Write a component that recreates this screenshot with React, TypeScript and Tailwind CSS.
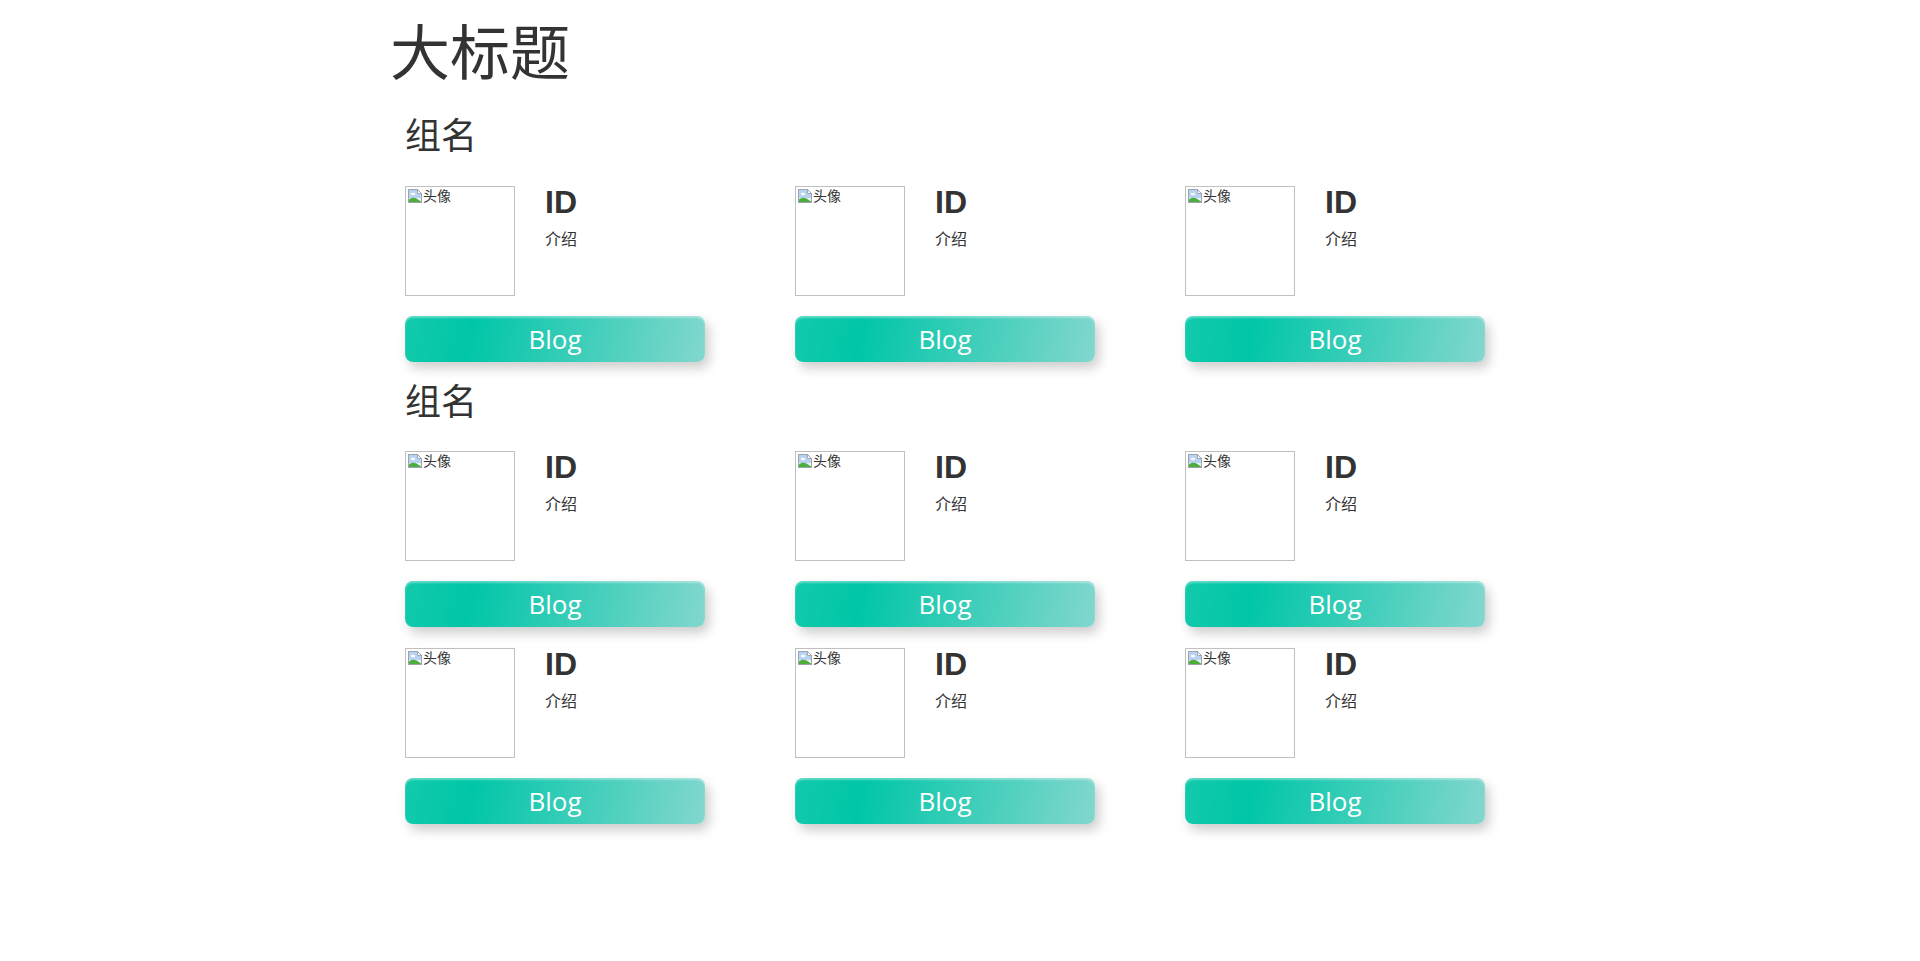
import React from "react";

const BrokenIcon = () => (
  <svg width="16" height="16" viewBox="0 0 16 16" className="shrink-0">
    <path d="M1.5 1.5h9l4 4v9h-13z" fill="#eef3fb" stroke="#a0a8b4" strokeWidth="1" />
    <path d="M10.5 1.5v4h4" fill="#ffffff" stroke="#a0a8b4" strokeWidth="1" />
    <path d="M2 2h8v4h4v4H2z" fill="#b9d3f2" />
    <ellipse cx="6" cy="6" rx="2.2" ry="1.2" fill="#ffffff" />
    <path d="M2 14V11.5C4 9.5 7 9 9.5 10.5L14 13.5V14z" fill="#4caf3c" />
    <path d="M1.5 1.5h9l4 4v9h-13z" fill="none" stroke="#9aa3ae" strokeWidth="1" />
  </svg>
);

const Card = () => (
  <div className="flex flex-col w-[300px] mb-[21px]">
    <div className="flex">
      <div className="w-[110px] h-[110px] border border-[#c0c0c0] shrink-0 flex items-start pl-px pt-px">
        <BrokenIcon />
        <span className="text-[14px] leading-[16px] text-[#333] font-['Liberation_Sans','Noto_Sans_CJK_SC',sans-serif]">
          头像
        </span>
      </div>
      <div className="ml-[30px] flex flex-col">
        <div className="text-[32px] leading-none font-bold text-[#333] font-['Liberation_Sans',Arial,sans-serif]">
          ID
        </div>
        <div className="mt-[12px] text-[16px] leading-none text-[#333] font-['Noto_Sans_CJK_SC',sans-serif]">
          介绍
        </div>
      </div>
    </div>
    <button className="mt-[20px] h-[46px] w-[300px] rounded-lg text-white text-[26px] font-['Open_Sans','Noto_Sans',sans-serif] bg-[linear-gradient(100deg,#12caab_0%,#00c6a7_22%,#82d7ce_100%)] shadow-[4px_6px_12px_rgba(0,0,0,0.2),inset_0_2px_2px_rgba(255,255,255,0.35)] flex items-center justify-center">
      Blog
    </button>
  </div>
);

const Group = ({ count, first }: { count: number; first?: boolean }) => (
  <section className={first ? "pl-[15px]" : "pl-[15px] -mt-[2px]"}>
    <h2
      className={
        first
          ? "text-[36px] leading-none text-[#333] font-['Noto_Sans_CJK_SC',sans-serif] mb-[35px]"
          : "text-[36px] leading-none text-[#333] font-['Noto_Sans_CJK_SC',sans-serif] mb-[34px]"
      }
    >
      组名
    </h2>
    <div className="grid grid-cols-[390px_390px_390px]">
      {Array.from({ length: count }).map((_, i) => (
        <Card key={i} />
      ))}
    </div>
  </section>
);

export default function App() {
  return (
    <div className="min-h-[961px] bg-white">
      <div className="w-[1170px] mx-auto px-[15px] pt-[19px]">
        <h1 className="text-[60px] leading-none text-[#333] font-['Noto_Sans_CJK_SC',sans-serif] mb-[36px]">
          大标题
        </h1>
        <Group count={3} first />
        <Group count={6} />
      </div>
    </div>
  );
}
